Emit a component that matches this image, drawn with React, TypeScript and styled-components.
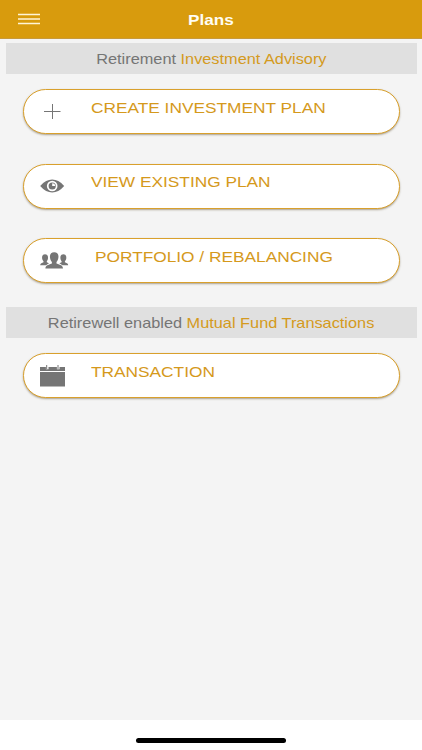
import React from "react";
import styled, { createGlobalStyle } from "styled-components";

const GlobalStyle = createGlobalStyle`
  * { box-sizing: border-box; }
  body { margin: 0; background: #fff; font-family: "Liberation Sans", Arial, sans-serif; }
`;

const Screen = styled.div`
  width: 422px;
  height: 750px;
  display: flex;
  flex-direction: column;
  background: #fff;
  overflow: hidden;
`;

const TopBar = styled.header`
  height: 39px;
  flex: none;
  display: grid;
  grid-template-columns: 60px 1fr 60px;
  align-items: center;
  background: #d89b0d;
  border-bottom: 1px solid #c79a3c;
`;

const MenuButton = styled.button`
  width: 22px;
  height: 12px;
  margin: 0 0 0 18px;
  padding: 0;
  border: 0;
  background: none;
  display: block;
  svg { display: block; }
`;

const Title = styled.h1`
  margin: 2px 0 0;
  font-size: 15px;
  line-height: 20px;
  font-weight: 700;
  color: #fffdf3;
  text-align: center;
  transform: scaleX(1.145);
`;

const Content = styled.main`
  flex: 1;
  background: #f4f4f4;
  padding: 4px 5.5px 0;
`;

const SectionHeading = styled.h2`
  margin: 0;
  height: 31px;
  background: #e0e0e0;
  display: flex;
  align-items: center;
  justify-content: center;
  font-size: 14.5px;
  font-weight: 400;
  color: #757575;
`;

const HeadingText = styled.span`
  white-space: nowrap;
  transform: scaleX(1.125);
`;

const Accent = styled.span`
  color: #d49a20;
`;

const PlanList = styled.nav<{ $bottom: number }>`
  display: flex;
  flex-direction: column;
  gap: 29.5px;
  padding: 15px 17px ${(p) => p.$bottom}px;
`;

const PlanButton = styled.button`
  height: 45px;
  width: 100%;
  display: flex;
  align-items: center;
  padding: 0 0 0 16.4px;
  border: 1px solid #d9a02c;
  border-radius: 23px;
  background: #fff;
  box-shadow: 0 1px 2px rgba(80, 60, 20, 0.45);
  font-family: inherit;
  text-align: left;
`;

const IconSlot = styled.span`
  width: 51px;
  flex: none;
  display: flex;
  color: #757575;
  svg { display: block; }
`;

const Label = styled.span<{ $indent?: number }>`
  margin-left: ${(p) => p.$indent ?? 0}px;
  margin-bottom: 8px;
  font-size: 15.5px;
  line-height: 20px;
  white-space: nowrap;
  color: #d5991c;
  transform: scaleX(1.115);
  transform-origin: left center;
`;

const HomeArea = styled.footer`
  height: 30px;
  flex: none;
  display: flex;
  justify-content: center;
  padding-top: 18px;
`;

const HomeIndicator = styled.div`
  width: 150px;
  height: 5px;
  border-radius: 3px;
  background: #000;
`;

const PlusIcon = () => (
  <svg width="25" height="16" viewBox="0 0 25 16">
    <path d="M4 7.500H20.500M12.500 0V15" stroke="currentColor" strokeWidth="1" fill="none" />
  </svg>
);

const EyeIcon = () => (
  <svg width="25" height="14" viewBox="0 0 25 14">
    <path d="M.2 7C4.200 2.500 8 .5 12.200.5S20.200 2.500 24.200 7C20.200 11.500 16.400 13.400 12.200 13.400S4.200 11.500.2 7Z" fill="currentColor" />
    <circle cx="12.2" cy="7" r="5.300" fill="#fff" />
    <circle cx="12.2" cy="7" r="3.600" fill="currentColor" />
    <path d="M12.200 4.200V7H15.200A3 3 0 0 0 12.200 4.200Z" fill="#fff" />
  </svg>
);

const SidePerson = "M5 2.200C7.400 2.200 8.300 4 8 6.200C7.900 7.600 7.300 8.600 6.800 9.200V10.300L9 11.300L6 13.200H.2C.3 11.700 1 11.300 3.500 10.300V9.200C2.600 8.300 2.200 7.400 2.100 6.200C1.800 4 2.700 2.200 5 2.200Z";

const GroupIcon = () => (
  <svg width="29" height="17" viewBox="0 0 29 17" fill="currentColor">
    <path d={SidePerson} />
    <path d={SidePerson} transform="translate(28.400 0) scale(-1 1)" />
    <path
      d="M14.200.3C17.500.3 18.800 2.600 18.400 5.500C18.200 7.600 17.300 9 16.500 9.900V11.600C20.500 13.200 22.700 13.300 23 16.500H5.400C5.700 13.300 7.900 13.200 11.900 11.600V9.900C11.100 9 10.200 7.600 10 5.500C9.600 2.600 10.900.3 14.200.3Z"
      stroke="#fff"
      strokeWidth="0.7"
      paintOrder="stroke"
    />
  </svg>
);

const CalendarIcon = () => (
  <svg width="25" height="22" viewBox="0 0 25 22">
    <path d="M0 2H25V6H0ZM0 7H25V21.500H0Z" fill="currentColor" />
    <path d="M7.200 0V4.300M18.200 0V4.300" stroke="#fff" strokeWidth="2.600" />
    <path d="M6.700 0V4M18 0V4" stroke="currentColor" strokeWidth="1" />
  </svg>
);

const advisoryPlans = [
  { label: "CREATE INVESTMENT PLAN", icon: <PlusIcon />, indent: 0 },
  { label: "VIEW EXISTING PLAN", icon: <EyeIcon />, indent: 0 },
  { label: "PORTFOLIO / REBALANCING", icon: <GroupIcon />, indent: 4 },
];

export default function App() {
  return (
    <>
      <GlobalStyle />
      <Screen>
        <TopBar>
          <MenuButton aria-label="Menu">
            <svg width="22" height="12" viewBox="0 0 22 12">
              <path d="M0 1.500H22M0 6H22M0 10.500H22" stroke="#fff5d8" strokeWidth="1.400" />
            </svg>
          </MenuButton>
          <Title>Plans</Title>
        </TopBar>
        <Content>
          <SectionHeading>
            <HeadingText>
              Retirement <Accent>Investment Advisory</Accent>
            </HeadingText>
          </SectionHeading>
          <PlanList $bottom={24}>
            {advisoryPlans.map((plan) => (
              <PlanButton key={plan.label}>
                <IconSlot>{plan.icon}</IconSlot>
                <Label $indent={plan.indent}>{plan.label}</Label>
              </PlanButton>
            ))}
          </PlanList>
          <SectionHeading>
            <HeadingText>
              Retirewell enabled <Accent>Mutual Fund Transactions</Accent>
            </HeadingText>
          </SectionHeading>
          <PlanList $bottom={0}>
            <PlanButton>
              <IconSlot><CalendarIcon /></IconSlot>
              <Label>TRANSACTION</Label>
            </PlanButton>
          </PlanList>
        </Content>
        <HomeArea>
          <HomeIndicator />
        </HomeArea>
      </Screen>
    </>
  );
}
